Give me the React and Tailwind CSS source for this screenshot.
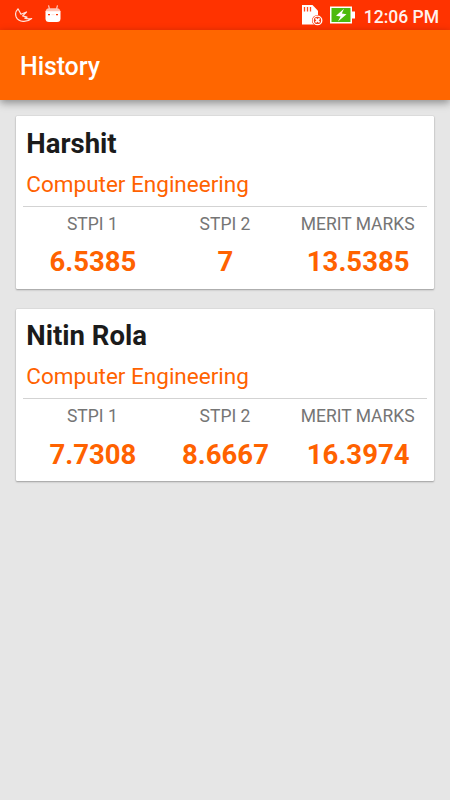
import React from 'react';

const records = [
  {
    id: 1,
    name: 'Harshit',
    branch: 'Computer Engineering',
    marks: [
      { label: 'STPI 1', value: '6.5385' },
      { label: 'STPI 2', value: '7' },
      { label: 'MERIT MARKS', value: '13.5385' },
    ],
  },
  {
    id: 2,
    name: 'Nitin Rola',
    branch: 'Computer Engineering',
    marks: [
      { label: 'STPI 1', value: '7.7308' },
      { label: 'STPI 2', value: '8.6667' },
      { label: 'MERIT MARKS', value: '16.3974' },
    ],
  },
];

const SwooshIcon = () => (
  <svg width="18" height="16" viewBox="0 0 18 16" fill="none" stroke="#ffe3dc" strokeWidth="1.2" strokeLinejoin="round">
    <path d="M3 1.8C.8 4 .2 7.5 1.200 10c2.400 5.500 10.800 5.700 15.400 1.500-2.600.5-4.800.4-6.800-.4l2.200-1-4.400-1.200L11.500 5 6 7.300z" />
  </svg>
);

const AndroidIcon = () => (
  <svg width="16" height="18" viewBox="0 0 16 18" fill="none">
    <path d="M3.5.4l1 3.600M12.500.4l-1 3.600" stroke="#ffc9bb" strokeWidth="1.2" />
    <path d="M.5 7Q.8 3.200 4 3.200h8q3.200 0 3.500 3.800z" fill="#ffc4b5" />
    <path d="M.5 6.300h15v7.200q0 3.500-3.500 3.500H4Q.5 17 .5 13.500z" fill="#fff" />
    <path d="M3 9.700h2M11 9.700h2" stroke="#ff3300" strokeWidth="1.3" />
    <path d="M6.500 9.700h3" stroke="#ffe1d9" />
  </svg>
);

const SdCardIcon = () => (
  <svg width="22" height="22" viewBox="0 0 22 22" fill="none">
    <path d="M1 1h10.500L17 6.800V20.500H1z" fill="#fff" />
    <path d="M3.500 3v4.500M6.500 3v4.500M9.500 3v4.500" stroke="#ff4a1e" strokeWidth="1.3" />
    <circle cx="16.5" cy="16.4" r="5.5" fill="#ff3300" />
    <circle cx="16.5" cy="16.4" r="4.3" fill="#f4411a" stroke="#fff" strokeWidth="1.3" />
    <path d="M14.500 14.400l4 4M18.500 14.400l-4 4" stroke="#fff" strokeWidth="1.6" />
  </svg>
);

const BatteryIcon = () => (
  <svg width="25" height="18" viewBox="0 0 25 18" fill="none">
    <path d="M0 .5h22v5h3v7h-3v5H0z" fill="#fff" />
    <path d="M1.500 2h19v14h-19z" fill="#4dba0c" />
    <path d="M14 2.800L6 9.800l4.600.7L8 15.400l8.500-7.100-4.700-.8z" fill="#fff" />
  </svg>
);

const StatusBar = () => (
  <div className="h-[30px] bg-[#ff3300] flex items-center pl-[15px] pr-[11px]">
    <SwooshIcon />
    <div className="ml-3 -mt-0.5">
      <AndroidIcon />
    </div>
    <div className="ml-auto flex items-center">
      <SdCardIcon />
      <div className="ml-[7px] mr-[9px]">
        <BatteryIcon />
      </div>
      <span className="text-[17.5px] leading-5 font-medium text-[#fff1ed] mt-[3px]">12:06 PM</span>
    </div>
  </div>
);

const RecordCard = ({ record }) => (
  <div className="h-[172.5px] bg-white rounded-[1px] px-[7px] shadow-[0_0_1px_rgba(0,0,0,0.3),0_1px_2px_rgba(0,0,0,0.3)]">
    <div className="pl-[3.3px] pt-[11.6px]">
      <h2 className="text-[27.5px] leading-8 font-bold text-[#1b1b1b]">{record.name}</h2>
      <p className="mt-[11px] text-[22.5px] leading-[27px] text-[#ff6200]">{record.branch}</p>
    </div>
    <div className="mt-[8.1px] border-t border-[#d3d3d3] px-[3px] grid grid-cols-3 text-center">
      {record.marks.map((mark) => (
        <div key={mark.label}>
          <div className="mt-1.5 text-[17.5px] leading-[22px] text-[#757575]">{mark.label}</div>
          <div className="mt-[11.4px] pl-px text-[27.5px] leading-8 font-bold text-[#ff6200]">{mark.value}</div>
        </div>
      ))}
    </div>
  </div>
);

const App = () => {
  return (
    <div className="h-screen bg-[#e6e6e6] font-[Roboto,sans-serif] overflow-hidden">
      <StatusBar />
      <header className="h-[70px] bg-[#ff6600] flex items-center pl-5 pt-1 shadow-[0_3px_8px_rgba(0,0,0,0.38)]">
        <h1 className="text-[25px] leading-8 font-medium text-white tracking-[-0.1px]">History</h1>
      </header>
      <main className="px-4 pt-4 flex flex-col gap-5">
        {records.map((record) => (
          <RecordCard key={record.id} record={record} />
        ))}
      </main>
    </div>
  );
};

export default App;
